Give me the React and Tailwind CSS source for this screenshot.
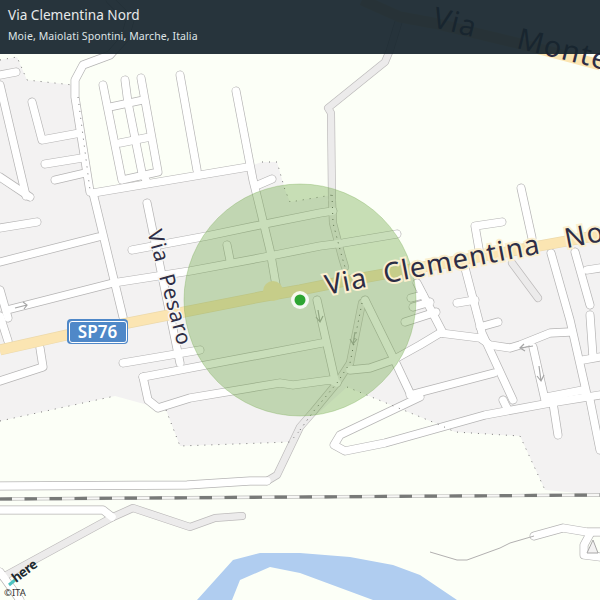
const whiteRoads = [
  '0,177 30,197',
  '0,85 26,196',
  '0,75 16,72',
  '32,102 42,140 80,133',
  '45,164 82,158',
  '55,180 85,173',
  '93,193 248,167',
  '258,185 272,179',
  '236,91 253,180 258,200 264,225 270,250 276,285',
  '180,75 197,170',
  '103,85 122,180 158,172 141,78',
  '125,80 128,103 142,173 146,180',
  '110,107 143,100',
  '120,143 150,137',
  '93,193 123,317',
  '147,203 180,363',
  '0,228 37,222',
  '0,262 98,237',
  '7,310 113,283 190,271 265,257 320,246 343,243 397,234',
  '132,250 207,236 260,225 320,213 333,211',
  '227,245 230,260',
  '0,290 8,318',
  '0,316 8,341',
  '40,348 43,367 0,381',
  '123,363 200,350',
  '143,377 322,343',
  '143,377 148,400 158,408 190,398 280,383 293,385 330,380 337,383',
  '317,300 335,380',
  '365,300 393,357 410,393',
  '350,370 370,368 393,360 420,345 440,333 480,338 490,345 510,348 520,345 550,333 570,332',
  '417,283 443,333',
  '502,222 475,226 480,255',
  '465,268 482,333 513,400',
  '457,303 475,300',
  '480,327 498,322',
  '411,298 423,295',
  '405,322 436,312',
  '413,307 430,302',
  '521,188 532,238',
  '551,253 570,320 587,395',
  '575,252 590,305',
  '590,315 593,357',
  '587,270 600,268',
  '583,360 600,357',
  '533,347 545,400',
  '547,397 583,390',
  '410,395 494,373',
  '420,397 340,435 334,445 345,451 385,443 485,415 550,403 600,395',
  '503,400 507,408',
  '553,403 558,435',
  '590,400 600,450',
  '534,536 563,528 587,532 600,532',
  '590,534 584,545 584,555 600,557',
  '0,486 187,485 250,481 267,481',
  '0,510 103,510 112,517',
  '0,572 20,600',
  '90,192 75,97 75,80 83,65 110,55 125,38 130,20 110,0',
]

const grayRoads = [
  '350,363 337,383 313,412 300,427 277,475 267,481',
  '362,303 350,363',
  '332,200 333,223 342,257 345,267',
  '332,200 331,113 328,108 385,62 390,50 400,17',
  '512,263 538,298',
  '3,577 113,517 133,508 190,527 215,518 242,516',
]

const dottedLines = [
  '0,60 17,57 27,80 73,85',
  '78,97 90,190',
  '262,162 277,162 285,190 290,202 332,195',
  '0,421 115,396',
  '166,410 180,446 290,442 302,428',
  '347,387 440,425 455,432 520,436 545,490',
]

const arrows = [
  { d: 'M15 308 L27 305 M23 302 L27 305 L24 309', key: 'a' },
  { d: 'M533 346 L520 348 M524 344 L520 348 L525 351', key: 'b' },
  { d: 'M539 366 L541 381 M537 376 L541 381 L544 375', key: 'c' },
  { d: 'M318 310 L320 322 M316 317 L320 322 L323 316', key: 'd' },
  { d: 'M355 332 L353 344 M350 339 L353 344 L357 339', key: 'e' },
]

function MapDrawing() {
  return (
    <svg viewBox="0 0 600 600" className="absolute inset-0 w-[600px] h-[600px]">
      {/* built up areas */}
      <path d="M0 60 L17 57 L27 80 L73 85 L90 192 L248 167 L262 162 L277 162 L285 190 L290 202 L332 195 L345 285 L600 238 L600 495 L545 490 L520 436 L455 432 L440 425 L347 387 L302 428 L290 442 L180 446 L166 410 L115 396 L0 421 Z" fill="#f3f2f2" />

      {/* road casings, then fills */}
      {grayRoads.map((p) => (
        <polyline key={p} points={p} fill="none" stroke="#bdbbbb" strokeWidth="8" strokeLinecap="round" strokeLinejoin="round" />
      ))}
      {whiteRoads.map((p) => (
        <polyline key={p} points={p} fill="none" stroke="#b5b4b4" strokeWidth="8.8" strokeLinecap="round" strokeLinejoin="round" />
      ))}
      {grayRoads.map((p) => (
        <polyline key={p} points={p} fill="none" stroke="#ecebeb" strokeWidth="6.6" strokeLinecap="round" strokeLinejoin="round" />
      ))}
      {whiteRoads.map((p) => (
        <polyline key={p} points={p} fill="none" stroke="#ffffff" strokeWidth="7.4" strokeLinecap="round" strokeLinejoin="round" />
      ))}

      {/* thin path bottom right */}
      <polyline points="430,552 457,560 467,560 500,548 510,543 534,536" fill="none" stroke="#b2b0b0" strokeWidth="1" />
      <path d="M587 553 L593 540 L598 553 Z" fill="#f3f2f2" stroke="#a8a7a7" strokeWidth="1" />

      {/* SP76 */}
      <polyline points="0,350 67,335 128,323 260,297 300,290 340,282 600,235" fill="none" stroke="#ecd9ab" strokeWidth="11" />
      <polyline points="0,350 67,335 128,323 260,297 300,290 340,282 600,235" fill="none" stroke="#fbe5b2" strokeWidth="9.6" />
      <circle cx="273" cy="291" r="10" fill="#fbe5b2" />
      <polyline points="362,0 400,17 433,23 517,43 600,65" fill="none" stroke="#fbe5b2" strokeWidth="11" />

      {dottedLines.map((p) => (
        <polyline key={p} points={p} fill="none" stroke="#777777" strokeWidth="1" strokeDasharray="1 6" />
      ))}
      <polyline points="332,195 333,223 342,257 345,267" fill="none" stroke="#555555" strokeWidth="1" strokeDasharray="1 5" />
      <polyline points="362,303 350,363 337,383 313,412 300,430" fill="none" stroke="#555555" strokeWidth="1" strokeDasharray="1 5" />

      {arrows.map((a) => (
        <path key={a.key} d={a.d} fill="none" stroke="#a5a5a5" strokeWidth="1.2" />
      ))}

      {/* railway */}
      <line x1="0" y1="499" x2="600" y2="495" stroke="#bdbdbb" strokeWidth="3.4" />
      <line x1="0" y1="499" x2="600" y2="495" stroke="#f7f7f5" strokeWidth="2" />
      <line x1="0" y1="499" x2="600" y2="495" stroke="#787a78" strokeWidth="3.2" strokeDasharray="12.5 12.5" strokeDashoffset="0.5" />

      {/* river */}
      <path d="M197 600 L233 560 L260 553 L300 553 L350 557 L393 565 L420 575 L457 600 L373 600 L300 573 L270 567 L240 580 L232 600 Z" fill="#b0cdf0" />

      {/* accuracy circle and marker */}
      <circle cx="300" cy="300" r="116" fill="#6da645" fillOpacity="0.37" stroke="#6da645" strokeOpacity="0.3" />
      <circle cx="300" cy="300" r="9" fill="#ffffff" fillOpacity="0.85" />
      <circle cx="300" cy="300" r="5.5" fill="#2da532" />
      <path d="M9 585 L15 580" stroke="#4cc3c0" strokeWidth="3" />
    </svg>
  )
}

export default function App() {
  return (
    <div className="relative w-[600px] h-[600px] overflow-hidden bg-[#fcfff7] font-['Noto_Sans',sans-serif]">
      <MapDrawing />

      {/* road labels */}
      <span className="absolute left-[325px] top-[268px] origin-left rotate-[-11deg] whitespace-pre text-[27.5px] leading-[34px] tracking-[1.2px] text-[#2e2d45] [-webkit-text-stroke:4px_#fbefcf] [paint-order:stroke]">
        Via  Clementina   Nord
      </span>
      <span className="absolute left-[155px] top-[216px] origin-left rotate-[75deg] whitespace-pre text-[21px] leading-[28px] tracking-[1px] text-[#2e2d45] [-webkit-text-stroke:3px_#f6f5f3] [paint-order:stroke]">
        Via  Pesaro
      </span>
      <span className="absolute left-[434px] top-[-1px] origin-left rotate-[14deg] whitespace-pre text-[29px] leading-[34px] tracking-[1px] text-[#2e2d45]">
        Via     Monte
      </span>

      {/* road shield */}
      <div className="absolute left-[67px] top-[319px] w-[61px] h-[25px] rounded-[4px] bg-[#4f88c8] p-[1.5px]">
        <div className="w-full h-full rounded-[3px] border-[1.5px] border-white flex items-center justify-center text-[17px] font-semibold text-white">
          SP76
        </div>
      </div>

      {/* logo and attribution */}
      <span className="absolute left-[13px] top-[572px] origin-left rotate-[-37deg] text-[13px] leading-[14px] tracking-[-0.5px] font-bold text-[#1f2a30]">
        here
      </span>
      <span className="absolute left-[4px] top-[587px] text-[9.5px] leading-[12px] text-[#333333]">©ITA</span>

      {/* header */}
      <div className="absolute inset-x-0 top-0 h-[54px] flex flex-col justify-center gap-[5px] bg-[#17252d]/93 px-2 pb-[6px]">
        <div className="text-[13.6px] leading-[18px] text-[#e7eaeb]">Via Clementina Nord</div>
        <div className="text-[10.5px] leading-[14px] tracking-[0.1px] text-[#dfe4e6]">Moie, Maiolati Spontini, Marche, Italia</div>
      </div>
    </div>
  )
}
